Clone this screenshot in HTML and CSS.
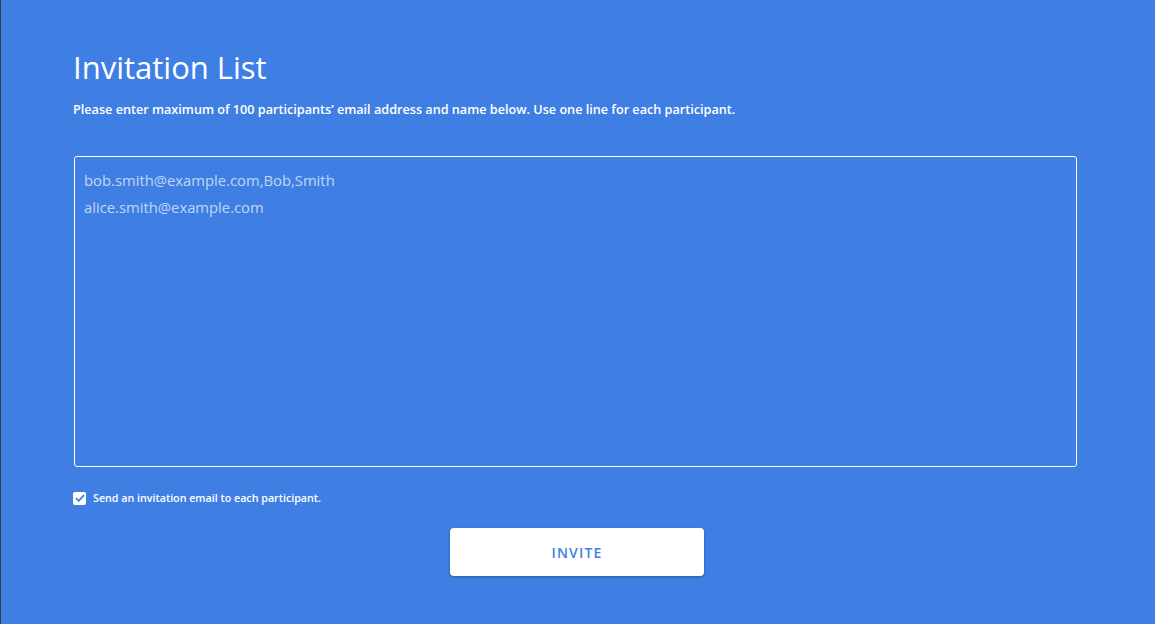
FILE: index.html
```html
<!DOCTYPE html>
<html lang="en">
<head>
    <meta charset="UTF-8">
    <meta name="viewport" content="width=device-width, initial-scale=1.0">
    <title>Invitation List</title>
    <link rel="stylesheet" href="styles.css">
</head>
<body>
    <div class="page">
        <h1>Invitation List</h1>
        <p class="hint">Please enter maximum of 100 participants’ email address and name below. Use one line for each participant.</p>

        <div class="list-box">
            <div class="placeholder">bob.smith@example.com,Bob,Smith</div>
            <div class="placeholder">alice.smith@example.com</div>
        </div>

        <label class="send-option">
            <span class="check">
                <svg width="10" height="8" viewBox="0 0 10 8"><path d="M1 4.2 L3.8 6.8 L9 1.2" fill="none" stroke="#3f7fe4" stroke-width="1.8"/></svg>
            </span>
            Send an invitation email to each participant.
        </label>

        <div class="actions">
            <button class="invite-btn">INVITE</button>
        </div>
    </div>
</body>
</html>
```

FILE: styles.css
```css
html, body {
    margin: 0;
    height: 100%;
}
body {
    font-family: 'Open Sans', 'Noto Sans', sans-serif;
    background-color: #3f7fe4;
    color: white;
    border-left: 1px solid #2d3b52;
    box-sizing: border-box;
}
.page {
    padding: 45px 78px 0 72px;
}
h1 {
    font-size: 31px;
    font-weight: 400;
    margin: 0;
    line-height: 44px;
}
.hint {
    font-size: 12.65px;
    font-weight: 600;
    margin: 11px 0 0;
    line-height: 18px;
}
.list-box {
    margin-top: 38px;
    margin-left: 1px;
    height: 291px;
    border: 1px solid white;
    border-radius: 3px;
    padding: 10px 9px 8px;
}
.placeholder {
    font-size: 14.8px;
    line-height: 27px;
    color: rgba(255, 255, 255, 0.68);
}
.send-option {
    display: flex;
    align-items: center;
    gap: 7px;
    margin-top: 24px;
    font-size: 10.7px;
    font-weight: 600;
}
.check {
    width: 13px;
    height: 13px;
    background-color: white;
    border-radius: 2px;
    display: flex;
    align-items: center;
    justify-content: center;
}
.actions {
    display: flex;
    justify-content: center;
    margin-top: 23px;
    padding-left: 4px;
}
.invite-btn {
    width: 254px;
    height: 48px;
    background-color: white;
    color: #3f7fe4;
    border: none;
    border-radius: 4px;
    box-shadow: 0 1px 3px rgba(0, 0, 0, 0.3);
    font-family: 'Open Sans', 'Noto Sans', sans-serif;
    font-size: 14px;
    font-weight: 600;
    letter-spacing: 1.2px;
    cursor: pointer;
}
```
